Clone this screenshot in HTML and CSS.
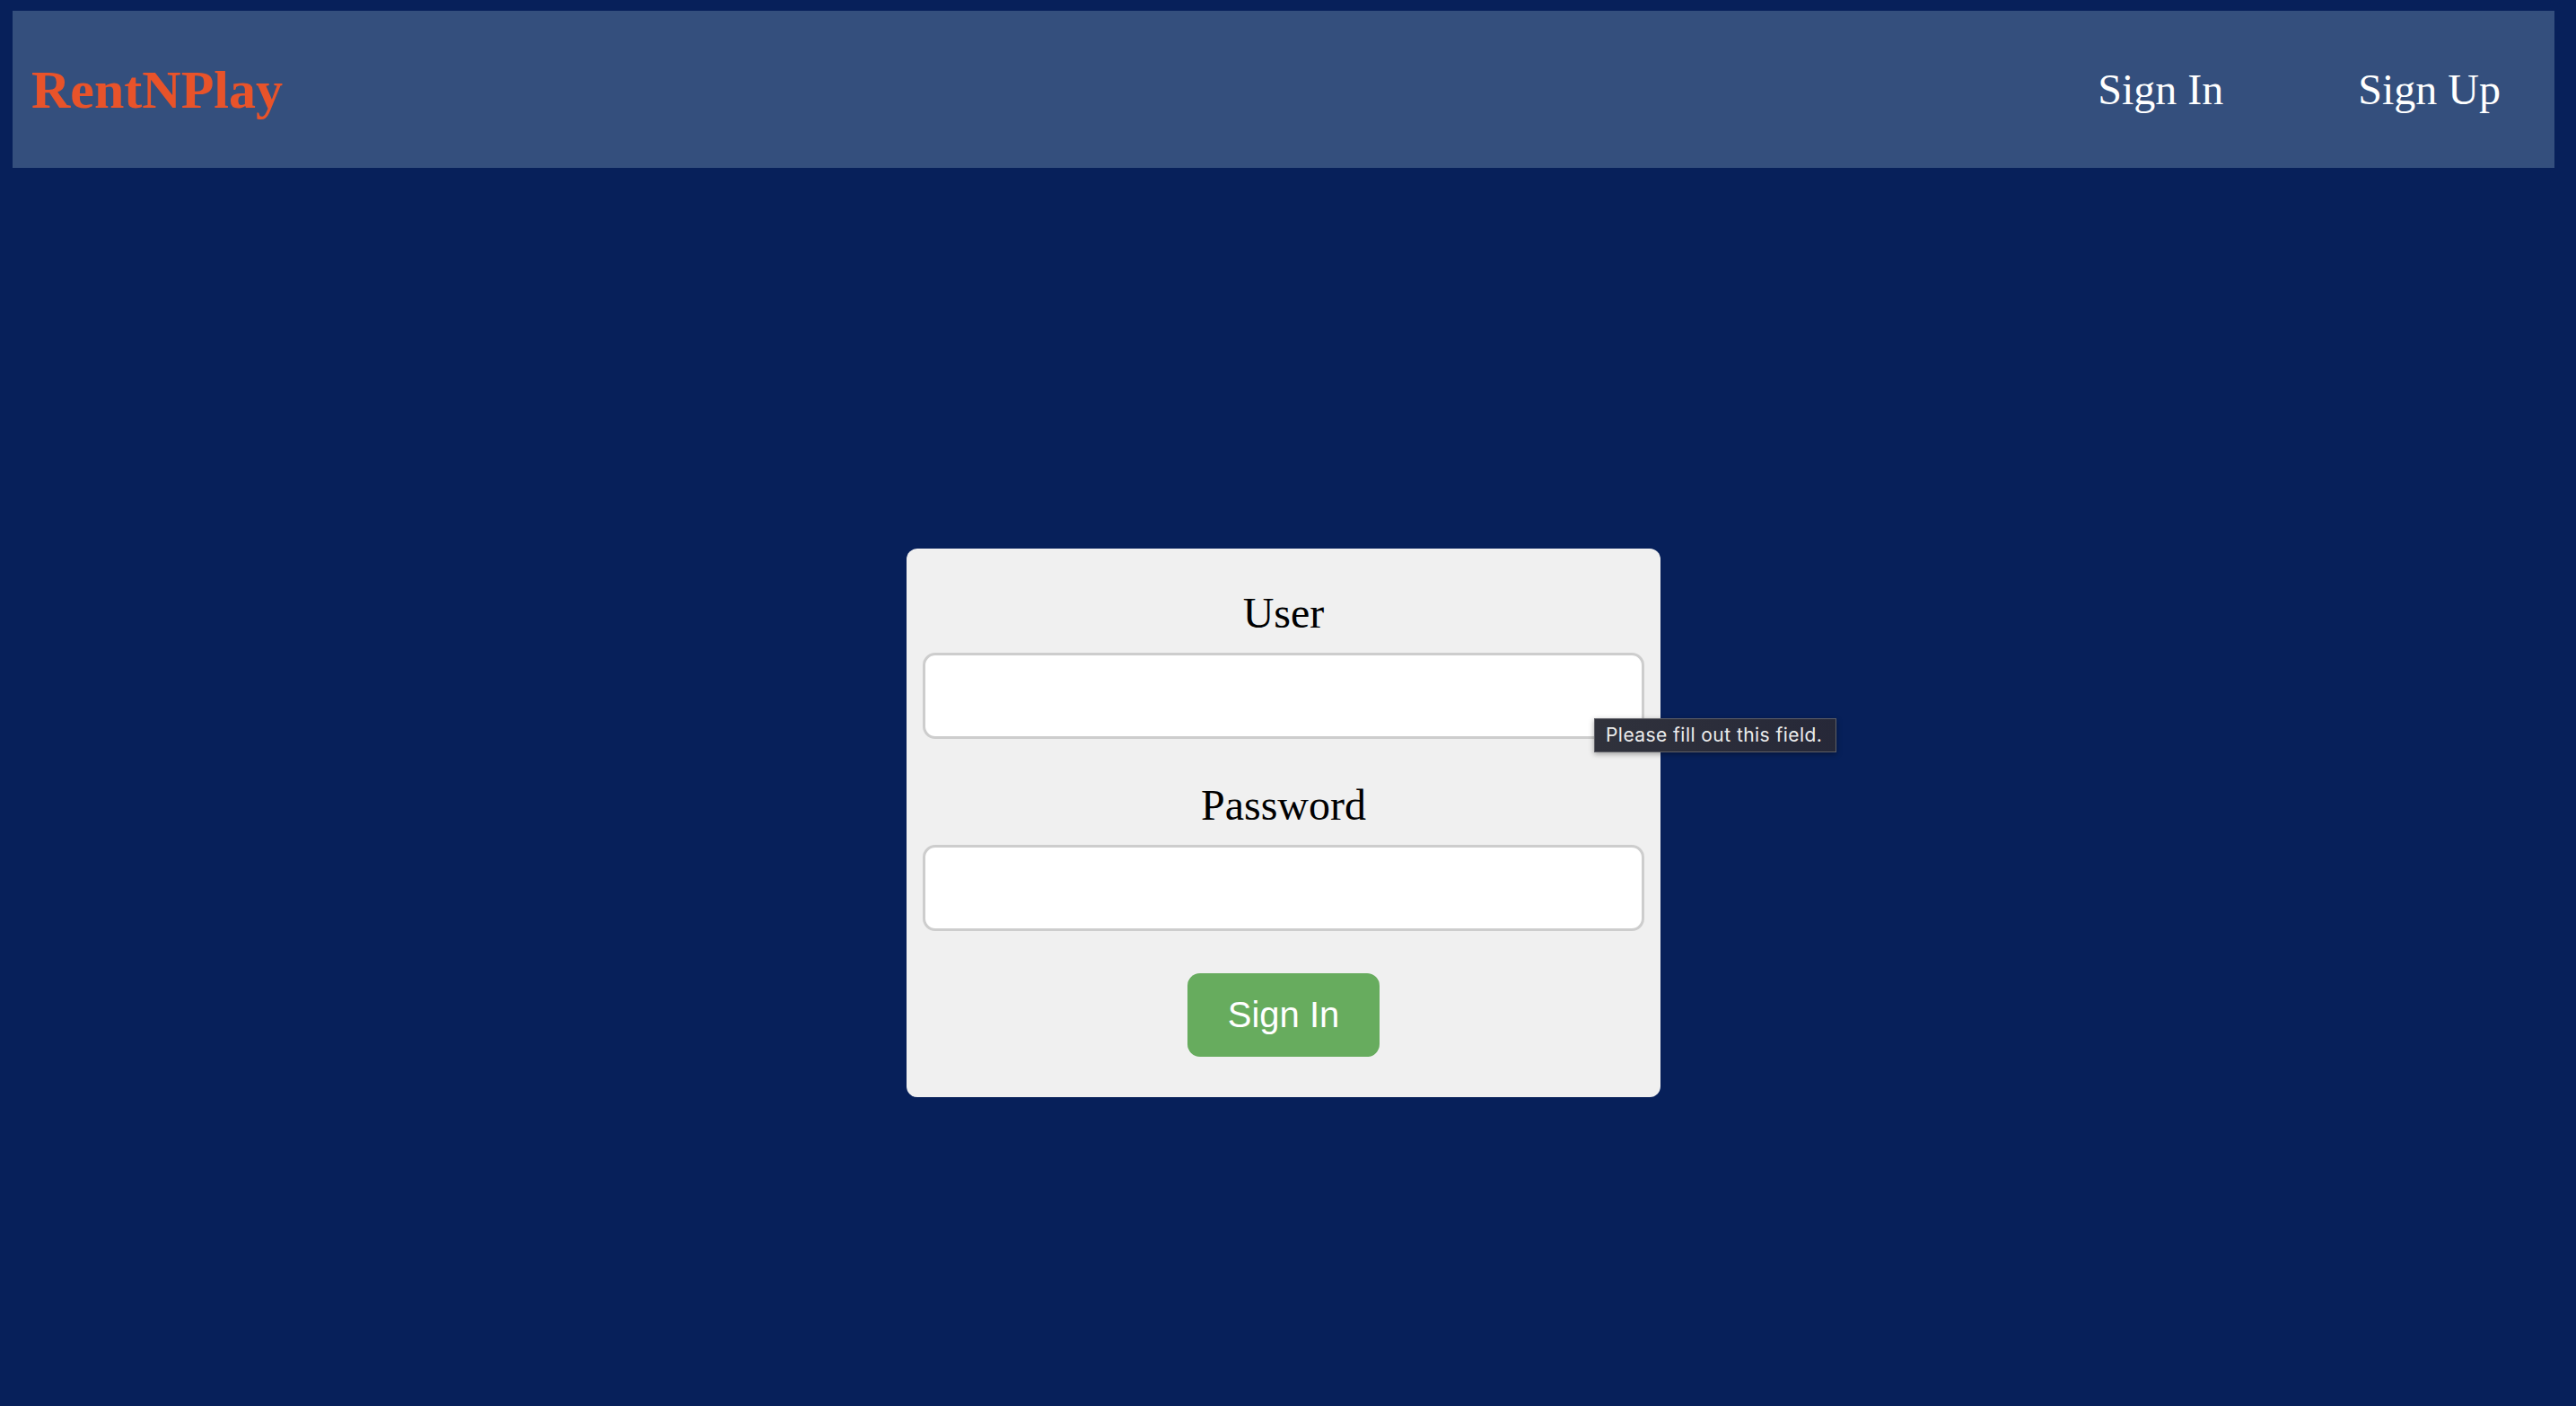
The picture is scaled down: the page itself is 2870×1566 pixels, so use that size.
FILE: index.html
```html
<!DOCTYPE html>
<html lang="en">
<head>
<meta charset="utf-8">
<title>RentNPlay - Sign In</title>
<link rel="stylesheet" href="styles.css">
</head>
<body>
<div class="page">
  <header class="topbar">
    <a class="logo" href="#">RentNPlay</a>
    <nav class="nav">
      <a class="nav-link" href="#">Sign In</a>
      <a class="nav-link" href="#">Sign Up</a>
    </nav>
  </header>
  <main class="main">
    <form class="card">
      <label class="field-label" for="user">User</label>
      <div class="field-wrap">
        <input class="field" id="user" type="text" required>
        <div class="tooltip">Please fill out this field.</div>
      </div>
      <label class="field-label field-label-second" for="password">Password</label>
      <div class="field-wrap">
        <input class="field" id="password" type="password" required>
      </div>
      <button class="submit" type="button">Sign In</button>
    </form>
  </main>
</div>
</body>
</html>
```

FILE: styles.css
```css
html, body {
  margin: 0;
  padding: 0;
  background: #07205a;
}

body {
  font-family: "Liberation Serif", "Times New Roman", serif;
  width: 2870px;
  height: 1566px;
  overflow: hidden;
}

.page {
  padding: 12px 24px 0 14px;
}

.topbar {
  height: 175px;
  background: #344f7d;
  display: flex;
  align-items: center;
  justify-content: space-between;
  padding: 0 60px 0 21px;
  box-sizing: border-box;
}

.logo {
  font-family: "Liberation Serif", "Times New Roman", serif;
  font-weight: bold;
  font-size: 60px;
  line-height: 60px;
  color: #e8532a;
  text-decoration: none;
}

.nav {
  display: flex;
  gap: 150px;
}

.nav-link {
  font-family: "Liberation Serif", "Times New Roman", serif;
  font-size: 48px;
  line-height: 48px;
  color: #ffffff;
  text-decoration: none;
}

.main {
  display: flex;
  justify-content: center;
  padding-top: 424px;
}

.card {
  width: 840px;
  box-sizing: border-box;
  background: #f0f0f0;
  border-radius: 12px;
  padding: 44px 18px 45px;
  display: flex;
  flex-direction: column;
  align-items: center;
}

.field-label {
  display: block;
  font-family: "Liberation Serif", "Times New Roman", serif;
  font-size: 48px;
  line-height: 56px;
  color: #000000;
  text-align: center;
  margin-bottom: 16px;
}

.field-label-second {
  margin-top: 46px;
}

.field-wrap {
  position: relative;
  width: 100%;
}

.field {
  display: block;
  width: 100%;
  height: 96px;
  box-sizing: border-box;
  border: 3px solid #cdcdcd;
  border-radius: 14px;
  background: #ffffff;
  margin: 0;
  padding: 0 20px;
  font-size: 36px;
  outline: none;
}

.tooltip {
  position: absolute;
  left: 748px;
  top: 73px;
  width: 270px;
  height: 38px;
  box-sizing: border-box;
  background: linear-gradient(90deg, #30323c, #262838);
  border: 1px solid #5e5f66;
  color: #ececec;
  font-family: Inter, "Liberation Sans", sans-serif;
  font-size: 21px;
  letter-spacing: 0.45px;
  line-height: 36px;
  padding-left: 12px;
  white-space: nowrap;
  box-shadow: 0 2px 6px rgba(0, 0, 0, 0.35);
  z-index: 2;
}

.submit {
  margin-top: 47px;
  width: 214px;
  height: 93px;
  border: none;
  border-radius: 14px;
  background: #67ac5e;
  color: #ffffff;
  font-family: "Liberation Sans", Arial, sans-serif;
  font-size: 40px;
  padding: 0;
  cursor: pointer;
}
```
